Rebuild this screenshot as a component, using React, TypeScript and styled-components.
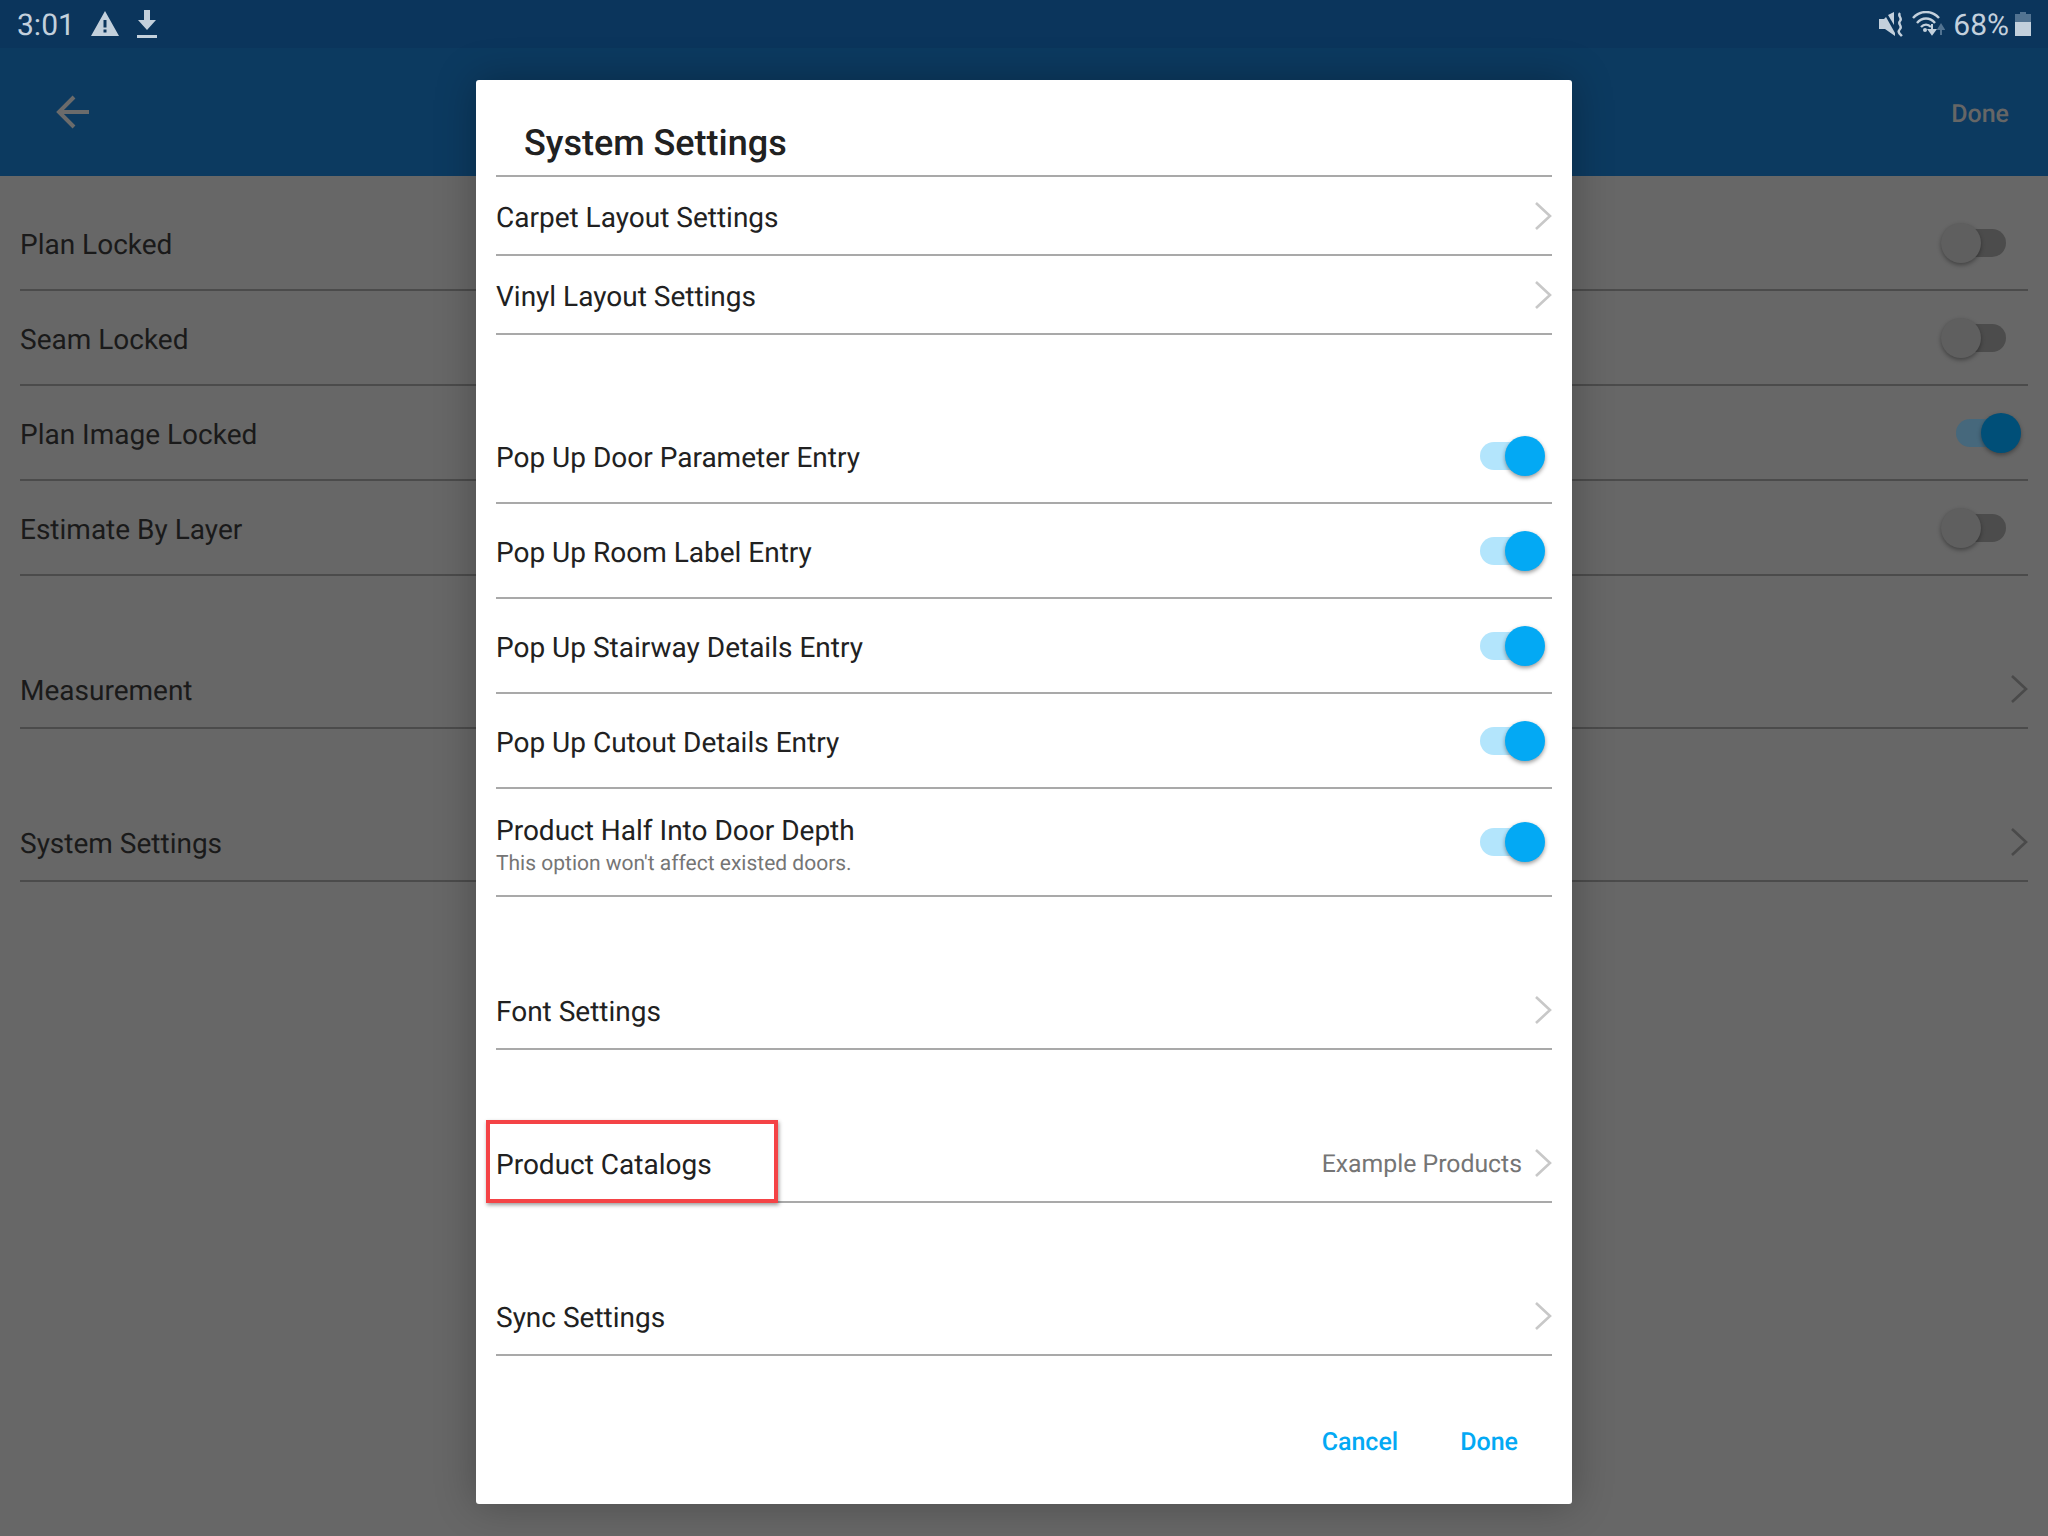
import React from "react";
import styled, { createGlobalStyle } from "styled-components";

const GlobalStyle = createGlobalStyle`
  html, body {
    margin: 0;
    padding: 0;
    background: #676767;
    font-family: Roboto, "Liberation Sans", sans-serif;
    text-rendering: geometricPrecision;
  }
`;

const Screen = styled.div`
  position: relative;
  width: 2048px;
  height: 1536px;
  overflow: hidden;
  background: #676767;
`;

const StatusBar = styled.div`
  display: flex;
  align-items: center;
  height: 48px;
  padding: 0 17px;
  background: #0b355c;
  color: #c3d0dc;
`;

const Clock = styled.span`
  padding-top: 2px;
  font-size: 30px;
  margin-right: 16px;
`;

const StatusRight = styled.div`
  display: flex;
  align-items: center;
  margin-left: auto;
`;

const Percent = styled.span`
  padding-top: 2px;
  font-size: 30px;
  margin: 0 6px 0 8px;
`;

const AppBar = styled.div`
  display: flex;
  align-items: center;
  justify-content: space-between;
  height: 128px;
  padding: 0 39px 0 56px;
  background: #0c3a60;
`;

const AppBarDone = styled.span`
  padding-top: 4px;
  font-size: 25px;
  font-weight: 500;
  color: #666;
`;

const BackList = styled.div`
  padding: 0 20px;
  color: #1a1a1a;
`;

const Group = styled.div<{ $gap: number }>`
  margin-top: ${(p) => p.$gap}px;
`;

const Row = styled.div<{ $height?: number; $dim?: boolean }>`
  display: flex;
  align-items: center;
  box-sizing: border-box;
  height: ${(p) => p.$height ?? 95}px;
  border-bottom: 2px solid ${(p) => (p.$dim ? "#4b4b4b" : "#a9a9a9")};
`;

const RowText = styled.div`
  flex: 1;
  min-width: 0;
  padding-top: 4px;
`;

const Label = styled.div`
  font-size: 28px;
  line-height: 34px;
`;

const SubLabel = styled.div`
  margin: 3px 0 -3px;
  font-size: 21px;
  line-height: 26px;
  color: #757575;
`;

const RowValue = styled.span`
  padding-top: 4px;
  font-size: 24.8px;
  color: #757575;
  margin-right: 12px;
`;

const Track = styled.div<{ $on: boolean; $dim?: boolean }>`
  position: relative;
  width: 50px;
  height: 28px;
  border-radius: 14px;
  margin-right: 22px;
  background: ${(p) =>
    p.$dim ? (p.$on ? "#46687c" : "#4c4c4c") : "#b3e5fc"};
`;

const Knob = styled.div<{ $on: boolean; $dim?: boolean }>`
  position: absolute;
  top: -6px;
  ${(p) => (p.$on ? "right: -15px;" : "left: -15px;")}
  width: 40px;
  height: 40px;
  border-radius: 50%;
  background: ${(p) =>
    p.$dim ? (p.$on ? "#004f78" : "#5f5f5f") : "#03a9f4"};
  box-shadow: 0 2px 4px rgba(0, 0, 0, ${(p) => (p.$dim ? 0.35 : 0.4)});
`;

const Dialog = styled.div`
  position: absolute;
  left: 476px;
  top: 80px;
  width: 1096px;
  height: 1424px;
  box-sizing: border-box;
  padding: 0 20px;
  background: #fff;
  border-radius: 3px;
  color: #212121;
  box-shadow: 0 0 40px rgba(0, 0, 0, 0.28);
`;

const DialogTitle = styled.div`
  display: flex;
  align-items: flex-end;
  box-sizing: border-box;
  height: 97px;
  padding: 0 0 10px 28px;
  font-size: 36px;
  font-weight: 500;
  line-height: 44px;
  border-bottom: 2px solid #a9a9a9;
`;

const DialogFooter = styled.div`
  display: flex;
  justify-content: flex-end;
  gap: 62px;
  padding: 70px 34px 0 0;
`;

const FooterButton = styled.span`
  font-size: 25px;
  font-weight: 500;
  line-height: 34px;
  color: #03a9f4;
`;

const Callout = styled.div`
  position: absolute;
  left: 486px;
  top: 1120px;
  width: 292px;
  height: 83px;
  box-sizing: border-box;
  border: 4px solid #f44346;
  box-shadow: 1px 2px 4px rgba(0, 0, 0, 0.4);
`;

const Chevron = ({ color }: { color: string }) => (
  <svg width="18" height="30" viewBox="0 0 18 30" style={{ flexShrink: 0 }}>
    <path d="M2 2 L16 15 L2 28" fill="none" stroke={color} strokeWidth="2.6" />
  </svg>
);

const Toggle = ({ on, dim }: { on: boolean; dim?: boolean }) => (
  <Track $on={on} $dim={dim}>
    <Knob $on={on} $dim={dim} />
  </Track>
);

const BackArrow = () => (
  <svg width="34" height="36" viewBox="0 0 34 36">
    <path
      d="M33 18 H3 M18 3 L3 18 L18 33"
      fill="none"
      stroke="#6b6b6b"
      strokeWidth="4"
    />
  </svg>
);

const WarningIcon = () => (
  <svg width="28" height="26" viewBox="0 0 28 26" style={{ marginRight: 18 }}>
    <path
      fillRule="evenodd"
      d="M14 0 L28 25 H0 Z M12.5 9 V16.5 H15.5 V9 Z M12.5 18.5 V21.5 H15.5 V18.5 Z"
      fill="#c3d0dc"
    />
  </svg>
);

const DownloadIcon = () => (
  <svg width="20" height="28" viewBox="0 0 20 28">
    <path d="M7 0 H13 V10 H19 L10 20 L1 10 H7 Z M0 25 H20 V28 H0 Z" fill="#c3d0dc" />
  </svg>
);

const MuteIcon = () => (
  <svg width="25" height="25" viewBox="0 0 25 25" style={{ marginRight: 8 }}>
    <path d="M0 7 H5 L7 5 L16 21 V24 L6 17 H0 Z" fill="#c3d0dc" />
    <path d="M9 3 L15 0 V13 Z" fill="#c3d0dc" />
    <path
      d="M21 1 C18 4 24 6 21 9 C18 12 24 14 21 17 C18 20 21 22 23 24"
      fill="none"
      stroke="#c3d0dc"
      strokeWidth="2.4"
    />
  </svg>
);

const WifiIcon = () => (
  <svg width="33" height="26" viewBox="0 0 33 26">
    <g fill="none" stroke="#c3d0dc" strokeWidth="2.4">
      <path d="M1 7 C8 -1 20 -1 27 7" />
      <path d="M5 12 C10 6 18 6 23 12" />
      <path d="M9 16 C12 13 16 13 19 16" />
    </g>
    <circle cx="13" cy="19" r="2" fill="#c3d0dc" />
    <path d="M20 13 V21 M17 19 L20 23 L23 19 Z" stroke="#c3d0dc" strokeWidth="2" fill="#c3d0dc" />
    <path d="M29 24 V17 M26.5 18 L29 14 L31.5 18 Z" stroke="#527391" strokeWidth="2" fill="#527391" />
  </svg>
);

const BatteryIcon = () => (
  <svg width="16" height="24" viewBox="0 0 16 24">
    <path d="M5 0 H11 V2 H16 V10 H0 V2 H5 Z" fill="#527391" />
    <rect x="0" y="10" width="16" height="14" fill="#c3d0dc" />
  </svg>
);

export default function App() {
  return (
    <Screen>
      <GlobalStyle />
      <StatusBar>
        <Clock>3:01</Clock>
        <WarningIcon />
        <DownloadIcon />
        <StatusRight>
          <MuteIcon />
          <WifiIcon />
          <Percent>68%</Percent>
          <BatteryIcon />
        </StatusRight>
      </StatusBar>
      <AppBar>
        <BackArrow />
        <AppBarDone>Done</AppBarDone>
      </AppBar>

      <BackList>
        <Group $gap={20}>
          {[
            ["Plan Locked", false],
            ["Seam Locked", false],
            ["Plan Image Locked", true],
            ["Estimate By Layer", false],
          ].map(([label, on]) => (
            <Row $dim key={label as string}>
              <RowText>
                <Label>{label}</Label>
              </RowText>
              <Toggle on={on as boolean} dim />
            </Row>
          ))}
        </Group>
        <Group $gap={74}>
          <Row $dim $height={79}>
            <RowText>
              <Label>Measurement</Label>
            </RowText>
            <Chevron color="#4a4a4a" />
          </Row>
        </Group>
        <Group $gap={74}>
          <Row $dim $height={79}>
            <RowText>
              <Label>System Settings</Label>
            </RowText>
            <Chevron color="#4a4a4a" />
          </Row>
        </Group>
      </BackList>

      <Dialog>
        <DialogTitle>System Settings</DialogTitle>
        <Row $height={79}>
          <RowText>
            <Label>Carpet Layout Settings</Label>
          </RowText>
          <Chevron color="#c8c8c8" />
        </Row>
        <Row $height={79}>
          <RowText>
            <Label>Vinyl Layout Settings</Label>
          </RowText>
          <Chevron color="#c8c8c8" />
        </Row>
        <Group $gap={74}>
          {[
            "Pop Up Door Parameter Entry",
            "Pop Up Room Label Entry",
            "Pop Up Stairway Details Entry",
            "Pop Up Cutout Details Entry",
          ].map((label) => (
            <Row key={label}>
              <RowText>
                <Label>{label}</Label>
              </RowText>
              <Toggle on />
            </Row>
          ))}
          <Row $height={108}>
            <RowText>
              <Label>Product Half Into Door Depth</Label>
              <SubLabel>This option won't affect existed doors.</SubLabel>
            </RowText>
            <Toggle on />
          </Row>
        </Group>
        <Group $gap={74}>
          <Row $height={79}>
            <RowText>
              <Label>Font Settings</Label>
            </RowText>
            <Chevron color="#c8c8c8" />
          </Row>
        </Group>
        <Group $gap={74}>
          <Row $height={79}>
            <RowText>
              <Label>Product Catalogs</Label>
            </RowText>
            <RowValue>Example Products</RowValue>
            <Chevron color="#c8c8c8" />
          </Row>
        </Group>
        <Group $gap={74}>
          <Row $height={79}>
            <RowText>
              <Label>Sync Settings</Label>
            </RowText>
            <Chevron color="#c8c8c8" />
          </Row>
        </Group>
        <DialogFooter>
          <FooterButton>Cancel</FooterButton>
          <FooterButton>Done</FooterButton>
        </DialogFooter>
      </Dialog>
      <Callout />
    </Screen>
  );
}
